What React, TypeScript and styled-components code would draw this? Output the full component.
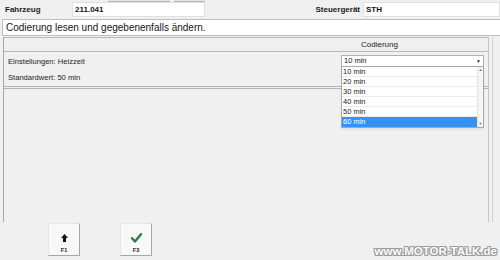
import React from "react";
import styled, { createGlobalStyle } from "styled-components";

const GlobalStyle = createGlobalStyle`
  html, body { margin: 0; padding: 0; background: #f0f0f0; }
  body { font-family: "Liberation Sans", Arial, sans-serif; color: #111; }
  #root { width: 500px; height: 260px; overflow: hidden; }
`;

const Page = styled.div`
  position: relative;
  width: 500px;
  height: 260px;
  overflow: hidden;
  background: #f0f0f0;
`;

const TabStrip = styled.div`
  display: flex;
  height: 2px;
  padding-left: 108px;
  gap: 4px;
`;

const TabEdge = styled.div<{ $w: number }>`
  width: ${(p) => p.$w}px;
  height: 1px;
  border-bottom: 1px solid #b9b9b9;
  background: #e4e4e4;
`;

const TopRow = styled.div`
  display: flex;
  align-items: center;
  height: 15px;
`;

const FieldLabel = styled.div<{ $w?: number; $right?: boolean }>`
  ${(p) => (p.$w ? `width: ${p.$w}px;` : "flex: 1;")}
  box-sizing: border-box;
  padding: ${(p) => (p.$right ? "0 3px 0 0" : "0 0 0 5px")};
  text-align: ${(p) => (p.$right ? "right" : "left")};
  font-size: 8px;
  font-weight: bold;
  color: #1a1a1a;
`;

const Field = styled.div<{ $w: number }>`
  width: ${(p) => p.$w}px;
  height: 15px;
  box-sizing: border-box;
  background: #fff;
  border: 1px solid #e0e0e0;
  padding-left: 2px;
  font-size: 8px;
  font-weight: bold;
  line-height: 13px;
  color: #111;
`;

const Spacer = styled.div`
  flex: 1;
`;

const Instruction = styled.div`
  margin: 2px 0 0 2px;
  height: 17px;
  box-sizing: border-box;
  background: #fff;
  border: 1px solid #bcbcbc;
  border-right: none;
  padding-left: 3px;
  font-size: 10px;
  line-height: 15px;
  color: #151515;
`;

const Panel = styled.div`
  margin: 1px 0 0 3px;
  width: 490px;
  height: 185px;
  box-sizing: border-box;
  border-right: 1px solid #d2d2d2;
  padding-right: 3px;
`;

const Table = styled.div`
  height: 100%;
  box-sizing: border-box;
  border-left: 1px solid #a8a8a8;
  border-right: 1px solid #c4c4c4;
`;

const HeaderRow = styled.div`
  display: grid;
  grid-template-columns: 267px 1fr;
  height: 15px;
  box-sizing: border-box;
  border-top: 1px solid #b8b8b8;
  border-bottom: 1px solid #b8b8b8;
  background: #efefef;
`;

const HeaderCell = styled.div`
  font-size: 8px;
  line-height: 13px;
  text-align: center;
  color: #222;
`;

const BodyRow = styled.div`
  display: grid;
  grid-template-columns: 267px 1fr;
  height: 37px;
  box-sizing: border-box;
  border-bottom: 3px double #b4b4b4;
`;

const InfoCell = styled.div`
  display: flex;
  flex-direction: column;
  gap: 7px;
  padding: 5px 0 0 4px;
  font-size: 7.6px;
  color: #222;
`;

const ValueCell = styled.div`
  position: relative;
  padding: 3px 0 0 70px;
`;

const Select = styled.div`
  position: relative;
  width: 143px;
  height: 12px;
  box-sizing: border-box;
  background: #fff;
  border: 1px solid #b0b0b0;
  font-size: 7.5px;
  line-height: 10px;
  padding-left: 2px;
  color: #111;
`;

const SelectArrow = styled.span`
  position: absolute;
  right: 2px;
  top: 0;
  font-size: 5px;
  line-height: 10px;
  color: #333;
`;

const List = styled.div`
  position: absolute;
  left: 70px;
  top: 14px;
  width: 143px;
  box-sizing: border-box;
  border: 1px solid #a8a8a8;
  background: #fff;
  display: flex;
  box-shadow: 0 2px 2px rgba(0, 0, 0, 0.06);
  z-index: 2;
`;

const Options = styled.div`
  flex: 1;
`;

const Option = styled.div<{ $sel?: boolean }>`
  height: 10px;
  box-sizing: border-box;
  padding-left: 1px;
  font-size: 7.5px;
  line-height: 10px;
  background: ${(p) => (p.$sel ? "#3592f5" : "#fff")};
  color: ${(p) => (p.$sel ? "#fff" : "#222")};
  border-bottom: 1px solid ${(p) => (p.$sel ? "#3592f5" : "#ececec")};
`;

const Scroll = styled.div`
  width: 5px;
  display: flex;
  flex-direction: column;
  justify-content: space-between;
  align-items: center;
  background: #f4f4f4;
  border-left: 1px solid #e6e6e6;
  font-size: 4px;
  line-height: 6px;
  color: #777;
`;

const ButtonRow = styled.div`
  display: flex;
  gap: 40px;
  padding: 1px 0 0 48px;
`;

const FnButton = styled.div`
  width: 32px;
  height: 33px;
  box-sizing: border-box;
  background: #f8f8f8;
  border: 1px solid #e6e6e6;
  border-right-color: #a6a6a6;
  border-bottom-color: #a6a6a6;
  display: flex;
  flex-direction: column;
  align-items: center;
  padding-top: 8px;
`;

const IconBox = styled.div`
  height: 11px;
  display: flex;
  align-items: center;
  justify-content: center;
`;

const FnLabel = styled.div`
  margin-top: 4px;
  font-size: 5.5px;
  font-weight: bold;
  color: #222;
`;

const Watermark = styled.div`
  position: absolute;
  right: 3px;
  bottom: 3px;
  font-size: 11.5px;
  font-weight: bold;
  letter-spacing: 0px;
  color: #fbfbfb;
  text-shadow: 1px 0 0 #9c9c9c, -1px 0 0 #9c9c9c, 0 1px 0 #9c9c9c, 0 -1px 0 #9c9c9c,
    1px 1px 0 #9c9c9c, -1px -1px 0 #9c9c9c, 1px -1px 0 #9c9c9c, -1px 1px 0 #9c9c9c;
`;

const options = ["10 min", "20 min", "30 min", "40 min", "50 min", "60 min"];

export default function App() {
  return (
    <Page>
      <GlobalStyle />
      <TabStrip>
        <TabEdge $w={62} />
        <TabEdge $w={31} />
      </TabStrip>
      <TopRow>
        <FieldLabel $w={72}>Fahrzeug</FieldLabel>
        <Field $w={133}>211.041</Field>
        <Spacer />
        <FieldLabel $w={120} $right>
          Steuergerät
        </FieldLabel>
        <Field $w={137}>STH</Field>
      </TopRow>
      <Instruction>Codierung lesen und gegebenenfalls ändern.</Instruction>
      <Panel>
        <Table>
          <HeaderRow>
            <div />
            <HeaderCell>Codierung</HeaderCell>
          </HeaderRow>
          <BodyRow>
            <InfoCell>
              <span>Einstellungen: Heizzeit</span>
              <span>Standardwert: 50 min</span>
            </InfoCell>
            <ValueCell>
              <Select>
                10 min
                <SelectArrow>▼</SelectArrow>
              </Select>
              <List>
                <Options>
                  {options.map((o) => (
                    <Option key={o} $sel={o === "60 min"}>
                      {o}
                    </Option>
                  ))}
                </Options>
                <Scroll>
                  <span>▲</span>
                  <span>▼</span>
                </Scroll>
              </List>
            </ValueCell>
          </BodyRow>
        </Table>
      </Panel>
      <ButtonRow>
        <FnButton>
          <IconBox>
            <svg width="7" height="8" viewBox="0 0 7 8">
              <polygon points="3.5,0 7,4 5,4 5,8 2,8 2,4 0,4" fill="#111" />
            </svg>
          </IconBox>
          <FnLabel>F1</FnLabel>
        </FnButton>
        <FnButton>
          <IconBox>
            <svg width="11" height="10" viewBox="0 0 11 10">
              <path d="M1 5.2 L4 8.5 L10 1.2" stroke="#2f7d3a" strokeWidth="2.4" fill="none" strokeLinecap="round" strokeLinejoin="round" />
            </svg>
          </IconBox>
          <FnLabel>F3</FnLabel>
        </FnButton>
      </ButtonRow>
      <Watermark>www.MOTOR-TALK.de</Watermark>
    </Page>
  );
}
